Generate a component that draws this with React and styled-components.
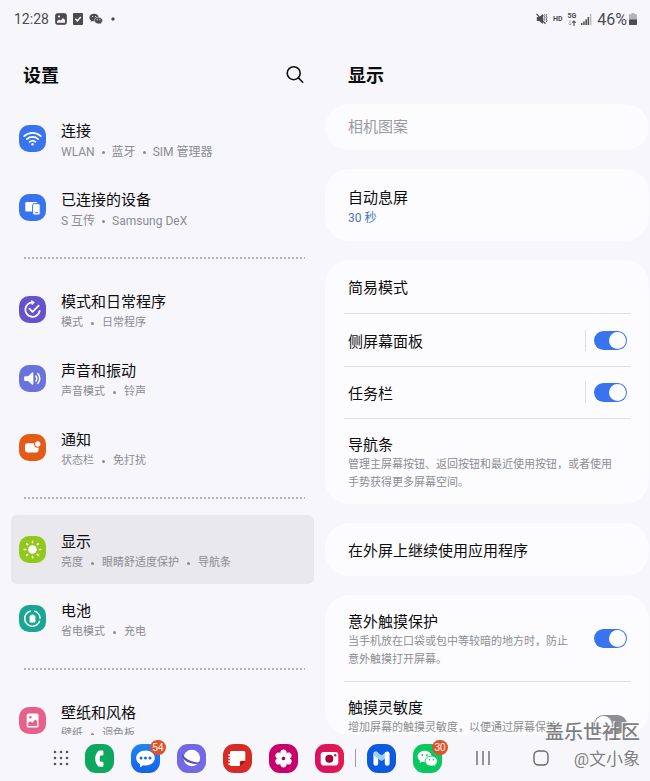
import React, { useState } from 'react';
import styled, { createGlobalStyle } from 'styled-components';

const GlobalStyle = createGlobalStyle`
  * {
    box-sizing: border-box;
  }
  body {
    margin: 0;
    background-color: #f6f6fb;
    font-family: Roboto, 'Noto Sans CJK SC', sans-serif;
    color: #0c0c0e;
  }
`;

const Screen = styled.div`
  position: relative;
  display: flex;
  flex-direction: column;
  height: 100vh;
  overflow: hidden;
`;

const StatusBar = styled.header`
  display: flex;
  align-items: center;
  justify-content: space-between;
  height: 38px;
  padding: 0 13px 0 14px;
  color: #4c4c50;
`;

const StatusGroup = styled.div`
  display: flex;
  align-items: center;
  gap: ${(props) => props.$gap}px;
`;

const Clock = styled.span`
  font-size: 14px;
`;

const Percent = styled.span`
  display: flex;
  align-items: center;
  gap: 2px;
  font-size: 16px;
`;

const Panes = styled.main`
  display: grid;
  grid-template-columns: 1fr 1fr;
  flex: 1;
  min-height: 0;
`;

const Pane = styled.section`
  display: flex;
  flex-direction: column;
  min-width: 0;
  min-height: 0;
`;

const PaneHeader = styled.div`
  display: flex;
  align-items: center;
  justify-content: space-between;
  height: 66px;
  flex-shrink: 0;
  padding: 8px 20px 0 23px;
`;

const Heading = styled.h1`
  margin: 0;
  padding-top: 2px;
  font-size: 18px;
  line-height: 26px;
  font-weight: 700;
`;

const IconButton = styled.button`
  display: flex;
  align-items: center;
  justify-content: center;
  padding: 0;
  border: none;
  background: none;
  color: inherit;
  cursor: pointer;
`;

const Menu = styled.nav`
  flex: 1;
  min-height: 0;
  overflow-y: auto;
  scrollbar-width: none;
  padding: 0 11px;
`;

const MenuItem = styled.a`
  display: flex;
  align-items: center;
  gap: 15px;
  height: 69px;
  padding: 0 8px;
  border-radius: 6px;
  background-color: ${(props) => (props.$active ? '#e8e8ed' : 'transparent')};
  color: inherit;
  text-decoration: none;
`;

const MenuIcon = styled.span`
  display: flex;
  flex-shrink: 0;
  width: 27px;
  height: 27px;
  border-radius: 10px;
  background-color: ${(props) => props.$color};
`;

const Texts = styled.div`
  flex: 1;
  min-width: 0;
  padding-top: 3px;
`;

const MenuTexts = styled(Texts)`
  padding-top: 5px;
`;

const Title = styled.div`
  font-size: 15px;
  line-height: 22px;
  white-space: nowrap;
  color: ${(props) => (props.$muted ? '#9a9aa0' : 'inherit')};
`;

const Sub = styled.div`
  font-size: ${(props) => (props.$latin ? 12 : 11)}px;
  line-height: 18px;
  color: ${(props) => (props.$link ? '#4a78b8' : '#8c8c92')};
`;

const MenuSub = styled(Sub)`
  display: flex;
  align-items: center;
  gap: ${(props) => (props.$latin ? 7 : 8)}px;
  line-height: 20px;
`;

const Dot = styled.span`
  width: 3px;
  height: 3px;
  border-radius: 50%;
  background-color: #8c8c92;
`;

const Dotted = styled.hr`
  height: 2px;
  margin: 15px 9px 16px 12px;
  border: none;
  background: radial-gradient(circle, #b2b2b8 1px, transparent 1px) 0 0 / 4px 2px;
`;

const Cards = styled.div`
  display: flex;
  flex-direction: column;
  gap: 19px;
  flex: 1;
  min-height: 0;
  overflow-y: auto;
  scrollbar-width: none;
  margin-right: 1px;
  border-radius: 24px;
`;

const Card = styled.div`
  flex-shrink: 0;
  padding: 0 18px 0 19px;
  border-radius: 24px;
  background-color: #fcfcfe;
`;

const Row = styled.div`
  display: flex;
  align-items: center;
  min-height: ${(props) => props.$height}px;
  padding: 0 4px;
  & + & {
    border-top: 1px solid #e0e0e5;
  }
`;

const TopTexts = styled(Texts)`
  align-self: flex-start;
  padding-top: 15px;
`;

const Divider = styled.span`
  width: 1px;
  height: 21px;
  margin-right: 8px;
  background-color: #dcdce1;
`;

const Toggle = styled.input`
  appearance: none;
  flex-shrink: 0;
  display: flex;
  width: 33px;
  height: 19px;
  margin: 0;
  padding: 1px;
  border-radius: 10px;
  background-color: #8e8e93;
  cursor: pointer;
  &::before {
    content: '';
    width: 17px;
    height: 17px;
    border-radius: 50%;
    background-color: #fcfcfe;
  }
  &:checked {
    justify-content: flex-end;
    background-color: #3874f0;
  }
`;

const Taskbar = styled.footer`
  display: flex;
  align-items: center;
  height: 46px;
  flex-shrink: 0;
  padding-left: 53px;
`;

const Apps = styled.div`
  display: flex;
  gap: 17px;
  margin-left: ${(props) => props.$left}px;
`;

const AppButton = styled.button`
  position: relative;
  width: 29px;
  height: 29px;
  padding: 0;
  border: none;
  border-radius: 11px;
  background: ${(props) => props.$color};
  cursor: pointer;
  svg {
    display: block;
  }
`;

const Badge = styled.span`
  position: absolute;
  top: -4px;
  right: -6px;
  width: 16px;
  height: 15px;
  border-radius: 8px;
  background-color: #e0532a;
  color: #fff;
  font-size: 10px;
  line-height: 15px;
  text-align: center;
`;

const TaskDivider = styled.span`
  width: 1px;
  height: 18px;
  margin-left: 11px;
  background-color: #9b9ba0;
`;

const NavButtons = styled.div`
  display: flex;
  gap: 42px;
  margin-left: 33px;
`;

const Watermark = styled.div`
  position: absolute;
  right: 10px;
  bottom: 9px;
  text-align: right;
  color: #808084;
  text-shadow: -1px -1px 0 #fff;
  pointer-events: none;
`;

const Community = styled.div`
  font-size: 19px;
  line-height: 26px;
  font-weight: 500;
`;

const Author = styled.div`
  font-size: 17px;
  line-height: 26px;
`;

const WifiIcon = () => (
  <svg width="27" height="27" viewBox="0 0 27 27" fill="none" stroke="#fff" strokeWidth="1.8" strokeLinecap="round">
    <path d="M5.2 11.2a12 12 0 0 1 16.6 0" />
    <path d="M7.9 14.1a8.2 8.2 0 0 1 11.2 0" />
    <path d="M10.6 16.9a4.3 4.3 0 0 1 5.8 0" />
    <circle cx="13.5" cy="19.3" r="1.2" fill="#fff" stroke="none" />
  </svg>
);

const DevicesIcon = () => (
  <svg width="27" height="27" viewBox="0 0 27 27">
    <rect x="6.3" y="8" width="12" height="9.6" rx="1.2" fill="#fff" />
    <rect x="13.6" y="9.6" width="7.6" height="11.4" rx="1.8" fill="#fff" stroke="#3874f0" strokeWidth="1" />
    <rect x="16" y="18.2" width="3" height="0.9" fill="#3874f0" />
  </svg>
);

const RoutineIcon = () => (
  <svg width="27" height="27" viewBox="0 0 27 27" fill="none" stroke="#fff" strokeWidth="1.8" strokeLinecap="round" strokeLinejoin="round">
    <path d="M13.6 6.4A7.2 7.2 0 1 0 20.6 15" />
    <path d="M12.8 4.8l2.6 1.5-2 2.2z" fill="#fff" strokeWidth="0.8" />
    <path d="M10.4 12.7l3.1 3.1 6.2-6.2" />
  </svg>
);

const SoundIcon = () => (
  <svg width="27" height="27" viewBox="0 0 27 27" fill="none" stroke="#fff" strokeWidth="1.5" strokeLinecap="round">
    <path d="M6 11.2h3l4-3.6c.6-.5 1.3-.2 1.3.5v11c0 .7-.7 1-1.3.5l-4-3.6H6c-.5 0-.8-.3-.8-.8V12c0-.5.3-.8.8-.8z" fill="#fff" stroke="none" />
    <path d="M16.8 11a3.9 3.9 0 0 1 0 5" />
    <path d="M18.8 8.6a7 7 0 0 1 0 9.8" />
  </svg>
);

const NoticeIcon = () => (
  <svg width="27" height="27" viewBox="0 0 27 27">
    <rect x="6" y="9.2" width="13.6" height="9.3" rx="2.4" fill="#fff" />
    <circle cx="18.8" cy="10" r="3.2" fill="#fff" stroke="#e45a17" strokeWidth="1.1" />
  </svg>
);

const SunIcon = () => (
  <svg width="27" height="27" viewBox="0 0 27 27" stroke="#fff" strokeWidth="1.5" strokeLinecap="round">
    <circle cx="13.5" cy="13.5" r="4.3" fill="#fff" stroke="none" />
    <path d="M13.5 5.2v1.5M13.5 20.3v1.5M5.2 13.5h1.5M20.3 13.5h1.5M7.6 7.6l1.1 1.1M18.3 18.3l1.1 1.1M7.6 19.4l1.1-1.1M18.3 8.7l1.1-1.1" />
  </svg>
);

const BatteryIcon = () => (
  <svg width="27" height="27" viewBox="0 0 27 27" fill="none" stroke="#fff" strokeWidth="1.5">
    <path d="M11.8 6A7.7 7.7 0 1 0 20.8 15.6" />
    <path d="M15.2 6a7.7 7.7 0 0 1 5.9 7.8" />
    <path d="M11.2 10.6h1.2V9.4h2.2v1.2h1.2c.4 0 .6.3.6.6v5.6c0 .4-.3.6-.6.6h-4.6c-.4 0-.6-.3-.6-.6v-5.6c0-.4.3-.6.6-.6z" fill="#fff" stroke="none" />
  </svg>
);

const WallpaperIcon = () => (
  <svg width="27" height="27" viewBox="0 0 27 27">
    <rect x="7.7" y="6.6" width="11.8" height="14" rx="1.6" fill="#fff" />
    <path d="M9.2 19v-3.4l2.2-1.4 2 1.6 3-3.2 1.7 1.4v5z" fill="#e8608a" />
    <circle cx="11.4" cy="10.3" r="1.2" fill="#e8608a" />
  </svg>
);

const WechatShape = ({ color, hole }) => (
  <>
    <path d="M11.6 6.8c-4 0-7 2.5-7 5.7 0 1.8 1 3.4 2.5 4.5l-.6 2 2.3-1.2c.9.3 1.800.4 2.800.4 4 0 7-2.500 7-5.700s-3-5.700-7-5.700z" fill={color} />
    <path d="M18.3 12.100c-3.500 0-6.200 2.200-6.200 5s2.700 5 6.200 5c.8 0 1.600-.1 2.300-.4l2.100 1.100-.5-1.900c1.400-.9 2.200-2.300 2.200-3.800 0-2.800-2.700-5-6.100-5z" fill={color} stroke={hole} strokeWidth="0.9" />
    <circle cx="9.3" cy="11" r="0.9" fill={hole} />
    <circle cx="13.9" cy="11" r="0.9" fill={hole} />
    <circle cx="16.3" cy="15.7" r="0.8" fill={hole} />
    <circle cx="20.3" cy="15.7" r="0.8" fill={hole} />
  </>
);

const StatusLeftIcons = () => (
  <>
    <svg width="12" height="12" viewBox="0 0 12 12">
      <rect x="0.7" y="0.7" width="10.6" height="10.6" rx="1.5" fill="#4c4c50" stroke="#4c4c50" />
      <path d="M2 9.800V8.200l2-1.800 1.500 1.100L8 5l2 2v2.800z" fill="#f6f6fb" />
      <circle cx="4" cy="3.5" r="1.1" fill="#f6f6fb" />
    </svg>
    <svg width="10" height="12" viewBox="0 0 10 12">
      <rect width="10" height="12" rx="1" fill="#4c4c50" />
      <path d="M2.3 5.8l2 2 3.500-3.800" fill="none" stroke="#f6f6fb" strokeWidth="1.5" />
    </svg>
    <svg width="14" height="12" viewBox="4 6 21 17.5">
      <WechatShape color="#4c4c50" hole="#f6f6fb" />
    </svg>
    <svg width="8" height="12" viewBox="0 0 8 12">
      <circle cx="4" cy="6" r="1.7" fill="#4c4c50" />
    </svg>
  </>
);

const MuteIcon = () => (
  <svg width="12" height="12" viewBox="0 0 12 12" fill="none" stroke="#4c4c50">
    <path d="M.8 4h2.400L7 1v10L3.200 8H.8z" fill="#4c4c50" stroke="none" />
    <path d="M.5.8l9 10" strokeWidth="1.2" />
    <path d="M8.600 1.200l-.8 1.600 1 1.600-1 1.600 1 1.600M10.800 1.200l-.8 1.600 1 1.600-1 1.600 1 1.600-1 1.800" strokeWidth="0.9" />
  </svg>
);

const Hd = styled.span`
  font-size: 7px;
  font-weight: 700;
`;

const Network = styled.span`
  display: flex;
  flex-direction: column;
  align-items: center;
  font-size: 7px;
  line-height: 7px;
  font-weight: 700;
`;

const SignalIcon = () => (
  <svg width="11" height="11" viewBox="0 0 11 11" fill="#4c4c50">
    <rect x="0" y="9" width="1.5" height="2" />
    <rect x="2.2" y="7.4" width="1.5" height="3.6" />
    <rect x="4.4" y="5.4" width="1.5" height="5.6" />
    <rect x="6.6" y="3" width="1.5" height="8" />
    <rect x="8.9" y="0" width="1.5" height="11" opacity="0.35" />
  </svg>
);

const PowerIcon = () => (
  <svg width="8" height="12" viewBox="0 0 8 12">
    <path d="M2.5 0h3v1.200H7c.6 0 1 .4 1 1V7H0V2.200c0-.6.4-1 1-1h1.500z" fill="#b4b4b8" />
    <path d="M0 6.500h8V11c0 .6-.4 1-1 1H1c-.6 0-1-.4-1-1z" fill="#4c4c50" />
  </svg>
);

const SearchIcon = () => (
  <svg width="20" height="20" viewBox="0 0 20 20" fill="none" stroke="#101012" strokeWidth="1.6" strokeLinecap="round">
    <circle cx="8.7" cy="8.2" r="6.5" />
    <path d="M13.4 12.9l4.3 4.3" />
  </svg>
);

const GridIcon = () => (
  <svg width="16" height="16" viewBox="0 0 16 16" fill="#55555a">
    {[2, 8, 14].map((y) => [2, 8, 14].map((x) => <circle key={`${x}-${y}`} cx={x} cy={y} r="1.3" />))}
  </svg>
);

const PhoneIcon = () => (
  <svg width="29" height="29" viewBox="0 0 29 29">
    <path d="M15.2 6.600h2.200c.6 0 1 .4 1 1v3c0 .6-.4 1-1 1h-2c-1 1.900-1 4.300 0 6.200h2c.6 0 1 .4 1 1v3c0 .6-.4 1-1 1h-2.200c-1.200 0-2-.4-2.700-1.300-3.100-4.100-3.100-9.500 0-13.600.7-.9 1.500-1.300 2.700-1.300z" fill="#fff" />
  </svg>
);

const MessageIcon = () => (
  <svg width="29" height="29" viewBox="0 0 29 29">
    <path d="M14.5 6.400c-5.300 0-9.300 3.200-9.300 7.500 0 2.600 1.400 4.800 3.700 6.100l.2 2.700c0 .4.4.6.7.3l2.200-1.800c.8.2 1.600.2 2.500.2 5.300 0 9.300-3.200 9.300-7.500s-4-7.500-9.300-7.500z" fill="#fff" />
    <circle cx="10" cy="14" r="1.5" fill="#1668e8" />
    <circle cx="14.5" cy="14" r="1.5" fill="#1668e8" />
    <circle cx="19" cy="14" r="1.5" fill="#1668e8" />
  </svg>
);

const BrowserIcon = () => (
  <svg width="29" height="29" viewBox="0 0 29 29">
    <circle cx="14.8" cy="14" r="8.3" fill="#fff" />
    <path d="M5.5 9.600c-1.500 3.300 2 7.700 8 9.500 5 1.500 9.500.9 10.800-1.300-2.500.9-6.300.8-10.200-.7-4.600-1.700-7.800-4.700-8.600-7.500z" fill="#5a4bb4" />
  </svg>
);

const NotesIcon = () => (
  <svg width="29" height="29" viewBox="0 0 29 29">
    <path d="M8.5 7h12.300c.9 0 1.500.6 1.500 1.500v8.300h-3.500c-1.200 0-2 .8-2 2V22H8.500c-.9 0-1.500-.6-1.500-1.500v-12C7 7.600 7.600 7 8.500 7z" fill="#fff" />
    <path d="M22.3 17.300L17.300 22v-3.200c0-.9.6-1.500 1.500-1.500z" fill="#8e1712" />
    <path d="M5.800 11h2M5.800 14h2M5.800 17h2M5.800 20h2" stroke="#fff" strokeWidth="1.3" strokeLinecap="round" />
  </svg>
);

const FlowerIcon = () => (
  <svg width="29" height="29" viewBox="0 0 29 29" fill="#fff">
    {[0, 60, 120, 180, 240, 300].map((deg) => (
      <path key={deg} d="M13.300 13.200c-1.300-1.500-1.900-3.200-1.900-4.700 0-1.800 1.300-2.900 3.100-2.900s3.100 1.100 3.100 2.900c0 1.500-.6 3.200-1.900 4.700z" transform={`rotate(${deg} 14.5 14.5)`} />
    ))}
    <circle cx="14.5" cy="14.5" r="3" fill="#fff" />
    <circle cx="14.5" cy="14.5" r="1.8" fill="#8c0a50" />
  </svg>
);

const CameraIcon = () => (
  <svg width="29" height="29" viewBox="0 0 29 29">
    <rect x="5.7" y="8" width="17.6" height="13.4" rx="2.8" fill="#fff" />
    <circle cx="14.3" cy="14.7" r="4" fill="#a30039" />
    <circle cx="20.2" cy="11.2" r="1.2" fill="#de1757" />
  </svg>
);

const MembersIcon = () => (
  <svg width="29" height="29" viewBox="0 0 29 29" fill="none" strokeWidth="4.8" strokeLinecap="round" strokeLinejoin="round">
    <path d="M8.8 10v9.400" stroke="#fff" />
    <path d="M9 10.200l5.500 4.200 5.500-4.200" stroke="#9cd0f8" />
    <path d="M20.200 10v9.400" stroke="#fff" />
  </svg>
);

const WechatIcon = () => (
  <svg width="29" height="29" viewBox="0 0 29 29">
    <WechatShape color="#fff" hole="#08c860" />
  </svg>
);

const menuGroups = [
  [
    { title: '连接', sub: ['WLAN', '蓝牙', 'SIM 管理器'], color: '#3874f0', Icon: WifiIcon, latin: true },
    { title: '已连接的设备', sub: ['S 互传', 'Samsung DeX'], color: '#3874f0', Icon: DevicesIcon, latin: true },
  ],
  [
    { title: '模式和日常程序', sub: ['模式', '日常程序'], color: '#6453cf', Icon: RoutineIcon },
    { title: '声音和振动', sub: ['声音模式', '铃声'], color: '#6a72dc', Icon: SoundIcon },
    { title: '通知', sub: ['状态栏', '免打扰'], color: '#e45a17', Icon: NoticeIcon },
  ],
  [
    { title: '显示', sub: ['亮度', '眼睛舒适度保护', '导航条'], color: '#90c81c', Icon: SunIcon, active: true },
    { title: '电池', sub: ['省电模式', '充电'], color: '#1ba593', Icon: BatteryIcon },
  ],
  [{ title: '壁纸和风格', sub: ['壁纸', '调色板'], color: '#e8608a', Icon: WallpaperIcon }],
];

const mainApps = [
  { name: '电话', color: '#0ca860', Icon: PhoneIcon },
  { name: '信息', color: 'linear-gradient(#1c86f4, #1464e6)', Icon: MessageIcon, badge: 54 },
  { name: '浏览器', color: '#7468e4', Icon: BrowserIcon },
  { name: '笔记', color: '#d92b25', Icon: NotesIcon },
  { name: '相册', color: '#c8006c', Icon: FlowerIcon },
  { name: '相机', color: 'linear-gradient(90deg, #d81060, #e41c50)', Icon: CameraIcon },
];

const recentApps = [
  { name: '盖乐世社区', color: '#0c5ae0', Icon: MembersIcon },
  { name: '微信', color: '#08c860', Icon: WechatIcon, badge: 30 },
];

function AppList({ apps, left }) {
  return (
    <Apps $left={left}>
      {apps.map(({ name, color, Icon, badge }) => (
        <AppButton key={name} $color={color} aria-label={name}>
          <Icon />
          {badge && <Badge>{badge}</Badge>}
        </AppButton>
      ))}
    </Apps>
  );
}

function SwitchRow({ id, title, lines = [], height, divider, top, initial }) {
  const [on, setOn] = useState(initial);
  const Content = top ? TopTexts : Texts;
  return (
    <Row $height={height}>
      <Content>
        <Title as="label" htmlFor={id}>{title}</Title>
        {lines.map((line) => (
          <Sub key={line}>{line}</Sub>
        ))}
      </Content>
      {divider && <Divider />}
      <Toggle id={id} type="checkbox" checked={on} onChange={(e) => setOn(e.target.checked)} />
    </Row>
  );
}

export default function App() {
  return (
    <Screen>
      <GlobalStyle />
      <StatusBar>
        <StatusGroup $gap={6}>
          <Clock>12:28</Clock>
          <StatusLeftIcons />
        </StatusGroup>
        <StatusGroup $gap={5}>
          <MuteIcon />
          <Hd>HD</Hd>
          <Network>
            5G
            <svg width="8" height="6" viewBox="0 0 8 6" fill="none" stroke="#4c4c50">
              <path d="M2 0v5M.5 3.500L2 5l1.500-1.500" strokeWidth="0.7" opacity="0.6" />
              <path d="M6 6V1M4.300 2.700L6 1l1.700 1.700" strokeWidth="1.1" />
            </svg>
          </Network>
          <SignalIcon />
          <Percent>
            46%
            <PowerIcon />
          </Percent>
        </StatusGroup>
      </StatusBar>

      <Panes>
        <Pane>
          <PaneHeader>
            <Heading>设置</Heading>
            <IconButton aria-label="搜索">
              <SearchIcon />
            </IconButton>
          </PaneHeader>
          <Menu>
            {menuGroups.map((group, index) => (
              <React.Fragment key={index}>
                {index > 0 && <Dotted />}
                {group.map(({ title, sub, color, Icon, active, latin }) => (
                  <MenuItem key={title} href="#" $active={active}>
                    <MenuIcon $color={color}>
                      <Icon />
                    </MenuIcon>
                    <MenuTexts>
                      <Title>{title}</Title>
                      <MenuSub $latin={latin}>
                        {sub.map((part, i) => (
                          <React.Fragment key={part}>
                            {i > 0 && <Dot />}
                            <span>{part}</span>
                          </React.Fragment>
                        ))}
                      </MenuSub>
                    </MenuTexts>
                  </MenuItem>
                ))}
              </React.Fragment>
            ))}
          </Menu>
        </Pane>

        <Pane>
          <PaneHeader>
            <Heading as="h2">显示</Heading>
          </PaneHeader>
          <Cards>
            <Card>
              <Row $height={46}>
                <Title $muted>相机图案</Title>
              </Row>
            </Card>
            <Card>
              <Row $height={72}>
                <Texts>
                  <Title>自动息屏</Title>
                  <Sub $link $latin>30 秒</Sub>
                </Texts>
              </Row>
            </Card>
            <Card>
              <Row $height={53}>
                <Texts>
                  <Title>简易模式</Title>
                </Texts>
              </Row>
              <SwitchRow id="edge" title="侧屏幕面板" height={53} divider initial />
              <SwitchRow id="taskbar" title="任务栏" height={52} divider initial />
              <Row $height={86}>
                <Texts>
                  <Title>导航条</Title>
                  <Sub>管理主屏幕按钮、返回按钮和最近使用按钮，或者使用</Sub>
                  <Sub>手势获得更多屏幕空间。</Sub>
                </Texts>
              </Row>
            </Card>
            <Card>
              <Row $height={53}>
                <Texts>
                  <Title>在外屏上继续使用应用程序</Title>
                </Texts>
              </Row>
            </Card>
            <Card>
              <SwitchRow
                id="accidental"
                title="意外触摸保护"
                lines={['当手机放在口袋或包中等较暗的地方时，防止', '意外触摸打开屏幕。']}
                height={86}
                initial
              />
              <SwitchRow
                id="sensitivity"
                title="触摸灵敏度"
                lines={['增加屏幕的触摸灵敏度，以便通过屏幕保护']}
                height={86}
                top
                initial={false}
              />
            </Card>
          </Cards>
        </Pane>
      </Panes>

      <Taskbar>
        <IconButton aria-label="所有应用">
          <GridIcon />
        </IconButton>
        <AppList apps={mainApps} left={16} />
        <TaskDivider />
        <AppList apps={recentApps} left={11} />
        <NavButtons>
          <IconButton aria-label="最近">
            <svg width="16" height="16" viewBox="0 0 16 16" stroke="#6a6a6e" strokeWidth="1.4">
              <path d="M2 1v14M8 1v14M14 1v14" />
            </svg>
          </IconButton>
          <IconButton aria-label="主屏幕">
            <svg width="16" height="16" viewBox="0 0 16 16" fill="none" stroke="#6a6a6e" strokeWidth="1.4">
              <rect x="1" y="1" width="14" height="14" rx="4.5" />
            </svg>
          </IconButton>
        </NavButtons>
      </Taskbar>

      <Watermark>
        <Community>盖乐世社区</Community>
        <Author>@文小象</Author>
      </Watermark>
    </Screen>
  );
}
